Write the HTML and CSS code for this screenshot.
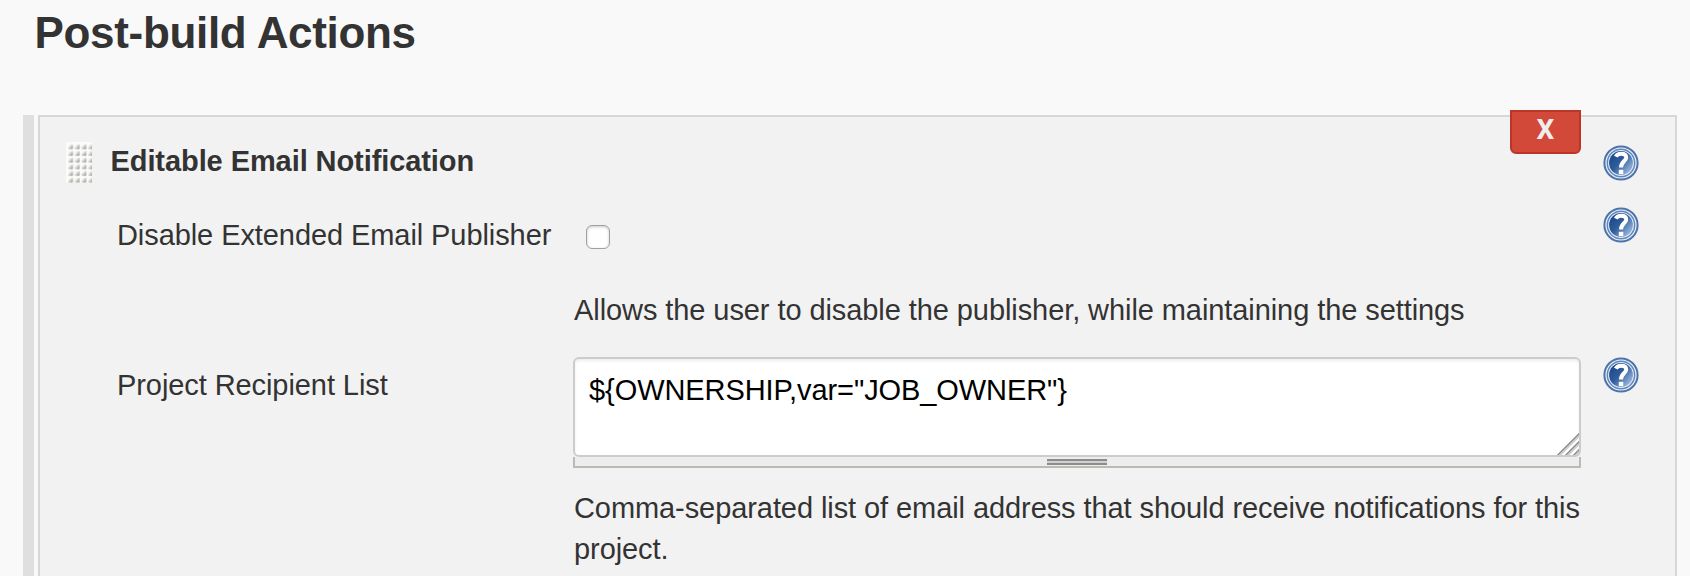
FILE: index.html
```html
<!DOCTYPE html>
<html lang="en">
<head>
<meta charset="utf-8">
<title>Post-build Actions</title>
<link rel="stylesheet" href="styles.css">
</head>
<body>
<svg class="defs" width="0" height="0" aria-hidden="true">
  <defs>
    <linearGradient id="ball" x1="0.15" y1="0.2" x2="0.9" y2="0.85">
      <stop offset="0" stop-color="#1f4c8c"/>
      <stop offset="0.4" stop-color="#2f5c9b"/>
      <stop offset="1" stop-color="#9ab8de"/>
    </linearGradient>
    <linearGradient id="dot" x1="0" y1="0" x2="1" y2="1">
      <stop offset="0.2" stop-color="#fbfbfa"/>
      <stop offset="0.85" stop-color="#a3a29c"/>
    </linearGradient>
    <pattern id="dots" x="1.7" y="1.7" width="6.67" height="6.67" patternUnits="userSpaceOnUse">
      <rect x="0" y="0" width="6.67" height="6.67" fill="#fbfbfa"/>
      <rect x="0.5" y="0.6" width="4.8" height="4.8" rx="0.6" fill="url(#dot)"/>
    </pattern>
    <symbol id="help" viewBox="0 0 36 36">
      <circle cx="18" cy="18" r="16.6" fill="#f0f5fb" stroke="#4d74aa" stroke-width="2"/>
      <circle cx="18" cy="18" r="13.7" fill="#e4ecf6" stroke="#6286ba" stroke-width="1.5"/>
      <circle cx="18" cy="18" r="11.9" fill="url(#ball)"/>
      <path d="M12.8 11.6C13.8 9.5 15.6 8.7 18.2 8.7C21.4 8.7 23.2 10 23.2 12.4C23.2 16.2 18 16.6 18 22.4" fill="none" stroke="#fff" stroke-width="4"/>
      <rect x="15.8" y="24.8" width="4.5" height="4.4" fill="#fff"/>
    </symbol>
  </defs>
</svg>
<h1 class="section-title">Post-build Actions</h1>
<div class="builder">
  <div class="builder-bar"></div>
  <section class="panel">
    <button class="delete" type="button">X</button>
    <header class="row row-header">
      <div class="heading">
        <svg class="handle" width="26" height="41" viewBox="0 0 26 41">
          <rect width="26" height="41" fill="#fbfbfa"/>
          <rect x="1.7" y="1.7" width="24.3" height="39.3" fill="url(#dots)"/>
        </svg>
        <strong class="name">Editable Email Notification</strong>
      </div>
      <svg class="help"><use href="#help"/></svg>
    </header>
    <div class="row row-line">
      <label class="label" for="disable">Disable Extended Email Publisher</label>
      <div class="field"><input class="check" id="disable" type="checkbox"></div>
      <svg class="help"><use href="#help"/></svg>
    </div>
    <div class="row row-line">
      <p class="note">Allows the user to disable the publisher, while maintaining the settings</p>
    </div>
    <div class="row">
      <label class="label" for="recipients">Project Recipient List</label>
      <div class="field">
        <div class="area-wrap">
          <textarea class="area" id="recipients" spellcheck="false">${OWNERSHIP,var="JOB_OWNER"}</textarea>
          <svg class="corner" width="22" height="22" viewBox="0 0 22 22" fill="none">
            <path d="M0 23L23 0M8 23L23 8M16 23L23 16" stroke="#8e8e8e" stroke-width="1.7"/>
            <path d="M2.2 23L23 2.2M10.2 23L23 10.2M18.2 23L23 18.2" stroke="#cfcfcf" stroke-width="1.8"/>
          </svg>
        </div>
        <div class="resizer"><span class="grip"></span></div>
        <p class="area-note">Comma-separated list of email address that should receive notifications for this project.</p>
      </div>
      <svg class="help"><use href="#help"/></svg>
    </div>
  </section>
</div>
</body>
</html>
```
FILE: styles.css
```css
* { box-sizing: border-box; }

body {
  margin: 0;
  height: 576px;
  display: flex;
  flex-direction: column;
  background: #f9f9f9;
  color: #333;
  font: 29px/41px "Liberation Sans", Helvetica, Arial, sans-serif;
  font-variant-ligatures: none;
  letter-spacing: -0.08px;
}

.defs { position: absolute; }

.section-title {
  margin: 0;
  padding: 7px 0 0 34.5px;
  height: 115px;
  flex: none;
  font-size: 44px;
  line-height: 52px;
  letter-spacing: -0.32px;
}

.builder {
  flex: 1;
  display: flex;
  gap: 4px;
  padding: 0 13px 0 23px;
}

.builder-bar { width: 11px; background: #dfdfdf; }

.panel {
  position: relative;
  flex: 1;
  border: 2px solid #d7d7d7;
  border-bottom: 0;
  background: #f2f2f2;
}

.delete {
  position: absolute;
  top: -7px;
  right: 94px;
  width: 71px;
  height: 44px;
  padding: 0 0 5px;
  border: 2px solid #bb3528;
  border-radius: 0 0 6px 6px;
  background: #d24939;
  color: #eee;
  font: bold 28px/35px Roboto, "Liberation Sans", sans-serif;
}

.row {
  display: grid;
  grid-template-columns: 457px 1008px 58px;
  padding-left: 76px;
}

.row-header { height: 90px; padding-top: 24px; }
.row-line { height: 75px; }

.heading {
  grid-column: 1 / 3;
  display: flex;
  gap: 18.5px;
  margin-left: -50px;
}

.handle { margin-top: 1px; }

.label { padding: 8px 0 0 1px; white-space: nowrap; }

.help {
  grid-column: 3;
  width: 36px;
  height: 36px;
  margin-left: 21.5px;
}

.row-header .help { margin-top: 4px; }

.check {
  appearance: none;
  display: block;
  width: 24px;
  height: 24px;
  margin: 18px 0 0 13px;
  border: 1px solid #a0a0a0;
  border-radius: 6px;
  background: #fff;
  box-shadow: inset 0 1px 3px #c8c8c8;
}

.note {
  grid-column: 2;
  margin: 8px 0 0 1px;
  white-space: nowrap;
}

.area-wrap { position: relative; height: 100px; }

.area {
  display: block;
  width: 100%;
  height: 100px;
  padding: 11px 14px;
  border: 2px solid #ccc;
  border-radius: 6px;
  background: #fff;
  box-shadow: inset 0 2px 3px #eee;
  color: #000;
  font: inherit;
  letter-spacing: inherit;
  resize: none;
  overflow: hidden;
}

.corner { position: absolute; right: 2px; bottom: 2px; }

.resizer {
  height: 11px;
  padding-top: 2px;
  display: flex;
  justify-content: center;
  border: 2px solid #bbbbb5;
  border-top: 0;
  background: #ededed;
}

.grip {
  width: 60px;
  height: 6px;
  border: solid #8c8d8a;
  border-width: 2px 0;
  background: #d0d1ce;
}

.area-note { margin: 20px 0 0 1px; width: 1018px; }
```
